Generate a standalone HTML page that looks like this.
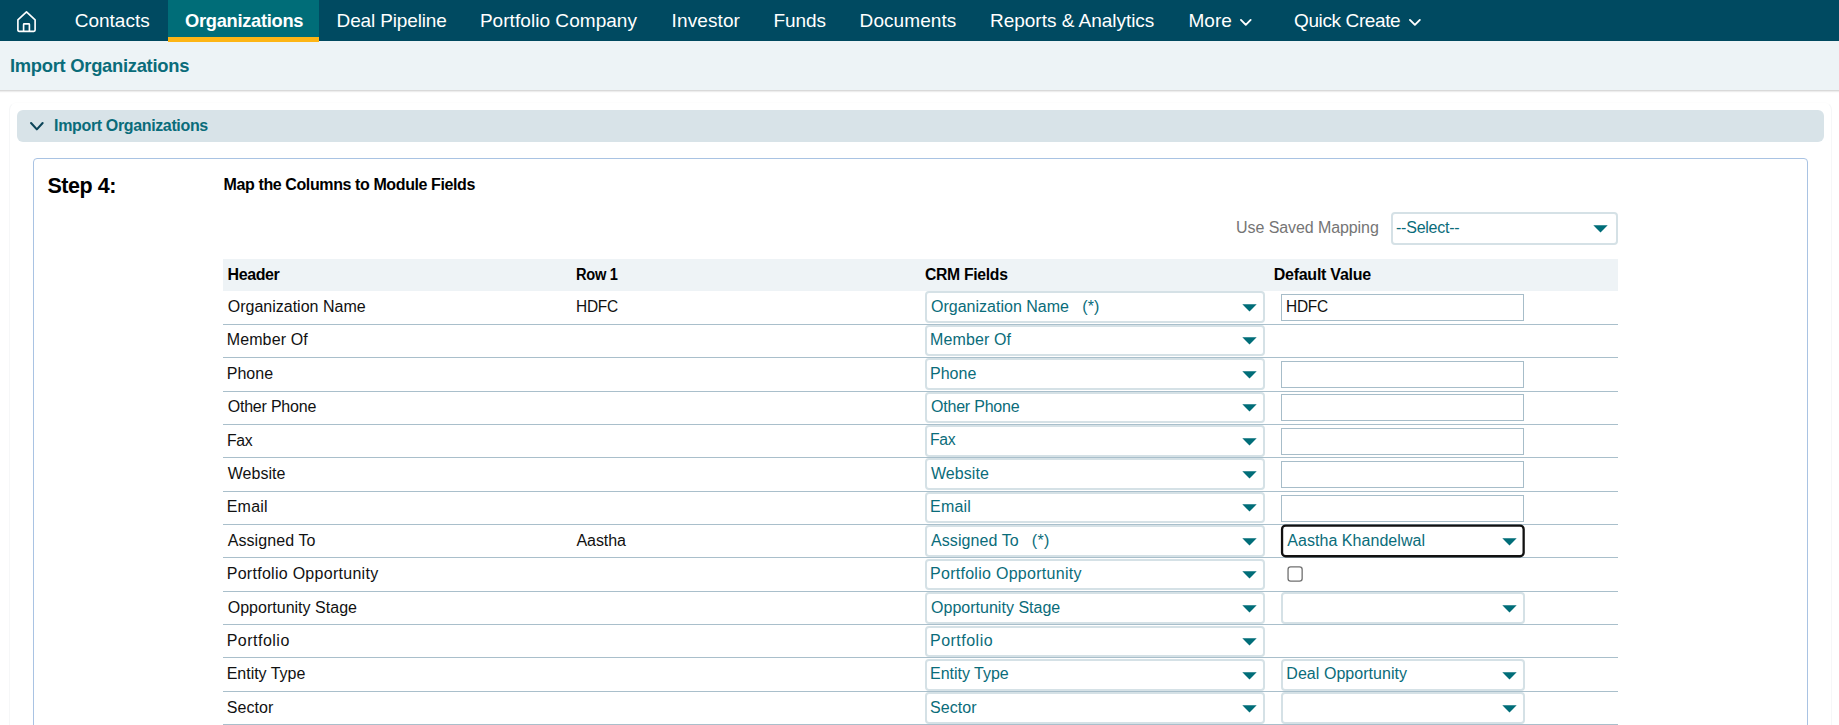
<!DOCTYPE html>
<html><head><meta charset="utf-8"><title>Import Organizations</title>
<style>
html,body{margin:0;padding:0;background:#fff;width:1839px;height:725px;overflow:hidden;}
#root{position:absolute;left:0;top:0;width:1839px;height:725px;overflow:hidden;background:#fff;font-family:"Liberation Sans", sans-serif;}
.b{position:absolute;box-sizing:content-box;}
.t{position:absolute;white-space:pre;line-height:1em;font-family:"Liberation Sans", sans-serif;transform-origin:0 0;}
</style></head><body><div id="root">
<div class="b" style="left:0;top:0;width:1839px;height:41px;background:#004a61"></div>
<div class="b" style="left:168px;top:0;width:151px;height:37px;background:#006d78"></div>
<div class="b" style="left:-6px;top:41px;width:1851px;height:49px;background:#edf3f6;box-shadow:0 1px 2px rgba(0,0,0,0.22)"></div>
<div class="b" style="left:168px;top:37px;width:151px;height:4.7px;background:#fdb515"></div>
<div class="b" style="left:9px;top:102px;width:1821px;height:700px;border:1px solid #f6f7f8;border-top-color:#fdfdfd;border-radius:8px"></div>
<div class="b" style="left:17px;top:110px;width:1807px;height:32px;background:#d8e3e8;border-radius:6px"></div>
<div class="b" style="left:33px;top:158px;width:1773px;height:700px;border:1px solid #a9c3e3;border-radius:4px"></div>
<div class="b" style="left:1391px;top:212px;width:223px;height:29px;border:2px solid #d5e1e6;border-radius:4px;background:#fff"></div>
<svg class="b" style="left:1592.7px;top:225px" width="15" height="8" viewBox="0 0 15 8"><path d="M0.3 0.3 L14.7 0.3 L7.5 7.6 Z" fill="#006d78"/></svg>
<div class="b" style="left:223px;top:258.7px;width:1395px;height:32.3px;background:#eef3f6"></div>
<div class="b" style="left:223px;top:324px;width:1395px;height:1px;background:#a9bfcb"></div>
<div class="b" style="left:925.3px;top:291.3px;width:335.3px;height:27.7px;border:2px solid #d5e1e6;border-radius:4px;background:#fff"></div>
<svg class="b" style="left:1242px;top:303.9px" width="15" height="8" viewBox="0 0 15 8"><path d="M0.3 0.3 L14.7 0.3 L7.5 7.6 Z" fill="#006d78"/></svg>
<div class="b" style="left:223px;top:357px;width:1395px;height:1px;background:#a9bfcb"></div>
<div class="b" style="left:925.3px;top:324.7px;width:335.3px;height:27.7px;border:2px solid #d5e1e6;border-radius:4px;background:#fff"></div>
<svg class="b" style="left:1242px;top:337.3px" width="15" height="8" viewBox="0 0 15 8"><path d="M0.3 0.3 L14.7 0.3 L7.5 7.6 Z" fill="#006d78"/></svg>
<div class="b" style="left:223px;top:391px;width:1395px;height:1px;background:#a9bfcb"></div>
<div class="b" style="left:925.3px;top:358.1px;width:335.3px;height:27.7px;border:2px solid #d5e1e6;border-radius:4px;background:#fff"></div>
<svg class="b" style="left:1242px;top:370.7px" width="15" height="8" viewBox="0 0 15 8"><path d="M0.3 0.3 L14.7 0.3 L7.5 7.6 Z" fill="#006d78"/></svg>
<div class="b" style="left:223px;top:424px;width:1395px;height:1px;background:#a9bfcb"></div>
<div class="b" style="left:925.3px;top:391.6px;width:335.3px;height:27.7px;border:2px solid #d5e1e6;border-radius:4px;background:#fff"></div>
<svg class="b" style="left:1242px;top:404.2px" width="15" height="8" viewBox="0 0 15 8"><path d="M0.3 0.3 L14.7 0.3 L7.5 7.6 Z" fill="#006d78"/></svg>
<div class="b" style="left:223px;top:457px;width:1395px;height:1px;background:#a9bfcb"></div>
<div class="b" style="left:925.3px;top:425.0px;width:335.3px;height:27.7px;border:2px solid #d5e1e6;border-radius:4px;background:#fff"></div>
<svg class="b" style="left:1242px;top:437.6px" width="15" height="8" viewBox="0 0 15 8"><path d="M0.3 0.3 L14.7 0.3 L7.5 7.6 Z" fill="#006d78"/></svg>
<div class="b" style="left:223px;top:491px;width:1395px;height:1px;background:#a9bfcb"></div>
<div class="b" style="left:925.3px;top:458.4px;width:335.3px;height:27.7px;border:2px solid #d5e1e6;border-radius:4px;background:#fff"></div>
<svg class="b" style="left:1242px;top:471.0px" width="15" height="8" viewBox="0 0 15 8"><path d="M0.3 0.3 L14.7 0.3 L7.5 7.6 Z" fill="#006d78"/></svg>
<div class="b" style="left:223px;top:524px;width:1395px;height:1px;background:#a9bfcb"></div>
<div class="b" style="left:925.3px;top:491.8px;width:335.3px;height:27.7px;border:2px solid #d5e1e6;border-radius:4px;background:#fff"></div>
<svg class="b" style="left:1242px;top:504.4px" width="15" height="8" viewBox="0 0 15 8"><path d="M0.3 0.3 L14.7 0.3 L7.5 7.6 Z" fill="#006d78"/></svg>
<div class="b" style="left:223px;top:557px;width:1395px;height:1px;background:#a9bfcb"></div>
<div class="b" style="left:925.3px;top:525.2px;width:335.3px;height:27.7px;border:2px solid #d5e1e6;border-radius:4px;background:#fff"></div>
<svg class="b" style="left:1242px;top:537.8px" width="15" height="8" viewBox="0 0 15 8"><path d="M0.3 0.3 L14.7 0.3 L7.5 7.6 Z" fill="#006d78"/></svg>
<div class="b" style="left:223px;top:591px;width:1395px;height:1px;background:#a9bfcb"></div>
<div class="b" style="left:925.3px;top:558.7px;width:335.3px;height:27.7px;border:2px solid #d5e1e6;border-radius:4px;background:#fff"></div>
<svg class="b" style="left:1242px;top:571.3px" width="15" height="8" viewBox="0 0 15 8"><path d="M0.3 0.3 L14.7 0.3 L7.5 7.6 Z" fill="#006d78"/></svg>
<div class="b" style="left:223px;top:624px;width:1395px;height:1px;background:#a9bfcb"></div>
<div class="b" style="left:925.3px;top:592.1px;width:335.3px;height:27.7px;border:2px solid #d5e1e6;border-radius:4px;background:#fff"></div>
<svg class="b" style="left:1242px;top:604.7px" width="15" height="8" viewBox="0 0 15 8"><path d="M0.3 0.3 L14.7 0.3 L7.5 7.6 Z" fill="#006d78"/></svg>
<div class="b" style="left:223px;top:657px;width:1395px;height:1px;background:#a9bfcb"></div>
<div class="b" style="left:925.3px;top:625.5px;width:335.3px;height:27.7px;border:2px solid #d5e1e6;border-radius:4px;background:#fff"></div>
<svg class="b" style="left:1242px;top:638.1px" width="15" height="8" viewBox="0 0 15 8"><path d="M0.3 0.3 L14.7 0.3 L7.5 7.6 Z" fill="#006d78"/></svg>
<div class="b" style="left:223px;top:691px;width:1395px;height:1px;background:#a9bfcb"></div>
<div class="b" style="left:925.3px;top:658.9px;width:335.3px;height:27.7px;border:2px solid #d5e1e6;border-radius:4px;background:#fff"></div>
<svg class="b" style="left:1242px;top:671.5px" width="15" height="8" viewBox="0 0 15 8"><path d="M0.3 0.3 L14.7 0.3 L7.5 7.6 Z" fill="#006d78"/></svg>
<div class="b" style="left:223px;top:724px;width:1395px;height:1px;background:#a9bfcb"></div>
<div class="b" style="left:925.3px;top:692.3px;width:335.3px;height:27.7px;border:2px solid #d5e1e6;border-radius:4px;background:#fff"></div>
<svg class="b" style="left:1242px;top:704.9px" width="15" height="8" viewBox="0 0 15 8"><path d="M0.3 0.3 L14.7 0.3 L7.5 7.6 Z" fill="#006d78"/></svg>
<div class="b" style="left:1281px;top:294.0px;width:241px;height:25px;border:1px solid #a7bdc9;background:#fff"></div>
<div class="b" style="left:1281px;top:360.8px;width:241px;height:25px;border:1px solid #a7bdc9;background:#fff"></div>
<div class="b" style="left:1281px;top:394.3px;width:241px;height:25px;border:1px solid #a7bdc9;background:#fff"></div>
<div class="b" style="left:1281px;top:427.7px;width:241px;height:25px;border:1px solid #a7bdc9;background:#fff"></div>
<div class="b" style="left:1281px;top:461.1px;width:241px;height:25px;border:1px solid #a7bdc9;background:#fff"></div>
<div class="b" style="left:1281px;top:494.5px;width:241px;height:25px;border:1px solid #a7bdc9;background:#fff"></div>
<div class="b" style="left:1281px;top:592.1px;width:239.5px;height:27.7px;border:2px solid #d5e1e6;border-radius:4px;background:#fff"></div>
<svg class="b" style="left:1502px;top:604.7px" width="15" height="8" viewBox="0 0 15 8"><path d="M0.3 0.3 L14.7 0.3 L7.5 7.6 Z" fill="#006d78"/></svg>
<div class="b" style="left:1281px;top:658.9px;width:239.5px;height:27.7px;border:2px solid #d5e1e6;border-radius:4px;background:#fff"></div>
<svg class="b" style="left:1502px;top:671.5px" width="15" height="8" viewBox="0 0 15 8"><path d="M0.3 0.3 L14.7 0.3 L7.5 7.6 Z" fill="#006d78"/></svg>
<div class="b" style="left:1281px;top:692.3px;width:239.5px;height:27.7px;border:2px solid #d5e1e6;border-radius:4px;background:#fff"></div>
<svg class="b" style="left:1502px;top:704.9px" width="15" height="8" viewBox="0 0 15 8"><path d="M0.3 0.3 L14.7 0.3 L7.5 7.6 Z" fill="#006d78"/></svg>
<svg class="b" style="left:1278px;top:522px" width="250" height="38" viewBox="1278 522 250 38"><rect x="1282.05" y="525.55" width="241.6" height="30.7" rx="3.6" ry="3.6" fill="#fff" stroke="#111" stroke-width="2.3"/></svg>
<svg class="b" style="left:1502px;top:537.8px" width="15" height="8" viewBox="0 0 15 8"><path d="M0.3 0.3 L14.7 0.3 L7.5 7.6 Z" fill="#006d78"/></svg>
<svg class="b" style="left:1285px;top:564px" width="20" height="20" viewBox="1285 564 20 20"><rect x="1288.05" y="566.85" width="14.1" height="14.3" rx="2.6" ry="2.6" fill="#fff" stroke="#707070" stroke-width="1.3"/></svg>
<svg class="b" style="left:14px;top:8px" width="26" height="26" viewBox="0 0 26 26"><path d="M3.9 11.8 L12.5 3.9 L21.1 11.8 V22 Q21.1 23.3 19.8 23.3 H5.2 Q3.9 23.3 3.9 22 Z" fill="none" stroke="#fff" stroke-width="1.65" stroke-linejoin="round"/><path d="M9.6 23.3 V16.4 Q9.6 15.8 10.2 15.8 H14.8 Q15.4 15.8 15.4 16.4 V23.3" fill="none" stroke="#fff" stroke-width="1.65"/></svg><svg class="b" style="left:1238px;top:17.2px" width="15.6" height="10.8" viewBox="-2 -2 15.6 10.8"><path d="M0.95 0.95 L5.8 5.85 L10.65 0.95" fill="none" stroke="#fff" stroke-width="1.9" stroke-linecap="round" stroke-linejoin="round"/></svg><svg class="b" style="left:1406.8px;top:17.2px" width="15.8" height="10.8" viewBox="-2 -2 15.8 10.8"><path d="M0.95 0.95 L5.9 5.85 L10.850000000000001 0.95" fill="none" stroke="#fff" stroke-width="1.9" stroke-linecap="round" stroke-linejoin="round"/></svg><svg class="b" style="left:28.3px;top:120.3px" width="17.7" height="12.4" viewBox="-2 -2 17.7 12.4"><path d="M1.05 1.05 L6.85 7.3500000000000005 L12.649999999999999 1.05" fill="none" stroke="#0d4559" stroke-width="2.1" stroke-linecap="round" stroke-linejoin="round"/></svg>
<span class="t" style="left:74.70px;top:11.00px;font-size:19px;font-weight:400;color:#fff;letter-spacing:-0.000px">Contacts</span>
<span class="t" style="left:184.60px;top:11.00px;font-size:19px;font-weight:700;color:#fff;letter-spacing:-0.300px;transform:scaleX(0.9626)">Organizations</span>
<span class="t" style="left:336.60px;top:11.00px;font-size:19px;font-weight:400;color:#fff;letter-spacing:-0.150px">Deal Pipeline</span>
<span class="t" style="left:479.90px;top:11.00px;font-size:19px;font-weight:400;color:#fff;letter-spacing:0.050px">Portfolio Company</span>
<span class="t" style="left:671.60px;top:11.00px;font-size:19px;font-weight:400;color:#fff;letter-spacing:0.100px">Investor</span>
<span class="t" style="left:773.40px;top:11.00px;font-size:19px;font-weight:400;color:#fff;letter-spacing:-0.075px">Funds</span>
<span class="t" style="left:859.60px;top:11.00px;font-size:19px;font-weight:400;color:#fff;letter-spacing:0.075px">Documents</span>
<span class="t" style="left:990.00px;top:11.00px;font-size:19px;font-weight:400;color:#fff;letter-spacing:-0.022px">Reports &amp; Analytics</span>
<span class="t" style="left:1188.40px;top:11.00px;font-size:19px;font-weight:400;color:#fff;letter-spacing:0.067px">More</span>
<span class="t" style="left:1294.00px;top:11.00px;font-size:19px;font-weight:400;color:#fff;letter-spacing:-0.382px">Quick Create</span>
<span class="t" style="left:9.50px;top:56.00px;font-size:19px;font-weight:700;color:#0a6c7a;letter-spacing:-0.300px;transform:scaleX(0.9676)">Import Organizations</span>
<span class="t" style="left:54.10px;top:118.00px;font-size:16px;font-weight:700;color:#0a6c7a;letter-spacing:-0.358px">Import Organizations</span>
<span class="t" style="left:47.40px;top:176.00px;font-size:21.5px;font-weight:700;color:#000;letter-spacing:-0.433px">Step 4:</span>
<span class="t" style="left:223.60px;top:177.00px;font-size:16px;font-weight:700;color:#000;letter-spacing:-0.394px">Map the Columns to Module Fields</span>
<span class="t" style="left:1236.10px;top:220.00px;font-size:16px;font-weight:400;color:#757575;letter-spacing:-0.087px">Use Saved Mapping</span>
<span class="t" style="left:1396.00px;top:220.00px;font-size:16px;font-weight:400;color:#0a6c7a;letter-spacing:-0.233px">--Select--</span>
<span class="t" style="left:227.50px;top:267.00px;font-size:16px;font-weight:700;color:#000;letter-spacing:-0.400px">Header</span>
<span class="t" style="left:576.40px;top:267.00px;font-size:16px;font-weight:700;color:#000;letter-spacing:-0.300px;transform:scaleX(0.9130)">Row 1</span>
<span class="t" style="left:924.50px;top:267.00px;font-size:16px;font-weight:700;color:#000;letter-spacing:-0.300px;transform:scaleX(0.9821)">CRM Fields</span>
<span class="t" style="left:1273.70px;top:267.00px;font-size:16px;font-weight:700;color:#000;letter-spacing:-0.250px">Default Value</span>
<span class="t" style="left:227.70px;top:299.00px;font-size:16px;font-weight:400;color:#111;letter-spacing:0.006px">Organization Name</span>
<span class="t" style="left:931.00px;top:299.00px;font-size:16px;font-weight:400;color:#0a6c7a;letter-spacing:0.006px">Organization Name</span>
<span class="t" style="left:226.70px;top:332.00px;font-size:16px;font-weight:400;color:#111;letter-spacing:0.125px">Member Of</span>
<span class="t" style="left:930.00px;top:332.00px;font-size:16px;font-weight:400;color:#0a6c7a;letter-spacing:0.125px">Member Of</span>
<span class="t" style="left:226.70px;top:366.00px;font-size:16px;font-weight:400;color:#111;letter-spacing:0.025px">Phone</span>
<span class="t" style="left:930.00px;top:366.00px;font-size:16px;font-weight:400;color:#0a6c7a;letter-spacing:0.025px">Phone</span>
<span class="t" style="left:227.70px;top:399.00px;font-size:16px;font-weight:400;color:#111;letter-spacing:-0.210px">Other Phone</span>
<span class="t" style="left:931.00px;top:399.00px;font-size:16px;font-weight:400;color:#0a6c7a;letter-spacing:-0.210px">Other Phone</span>
<span class="t" style="left:226.72px;top:433.00px;font-size:16px;font-weight:400;color:#111;letter-spacing:-0.300px;transform:scaleX(0.9840)">Fax</span>
<span class="t" style="left:930.02px;top:432.00px;font-size:16px;font-weight:400;color:#0a6c7a;letter-spacing:-0.300px;transform:scaleX(0.9840)">Fax</span>
<span class="t" style="left:227.70px;top:466.00px;font-size:16px;font-weight:400;color:#111;letter-spacing:0.050px">Website</span>
<span class="t" style="left:931.00px;top:466.00px;font-size:16px;font-weight:400;color:#0a6c7a;letter-spacing:0.050px">Website</span>
<span class="t" style="left:226.70px;top:499.00px;font-size:16px;font-weight:400;color:#111;letter-spacing:0.225px">Email</span>
<span class="t" style="left:930.00px;top:499.00px;font-size:16px;font-weight:400;color:#0a6c7a;letter-spacing:0.225px">Email</span>
<span class="t" style="left:227.70px;top:533.00px;font-size:16px;font-weight:400;color:#111;letter-spacing:0.080px">Assigned To</span>
<span class="t" style="left:931.00px;top:533.00px;font-size:16px;font-weight:400;color:#0a6c7a;letter-spacing:0.080px">Assigned To</span>
<span class="t" style="left:226.70px;top:566.00px;font-size:16px;font-weight:400;color:#111;letter-spacing:0.280px">Portfolio Opportunity</span>
<span class="t" style="left:930.00px;top:566.00px;font-size:16px;font-weight:400;color:#0a6c7a;letter-spacing:0.280px">Portfolio Opportunity</span>
<span class="t" style="left:227.70px;top:600.00px;font-size:16px;font-weight:400;color:#111;letter-spacing:0.019px">Opportunity Stage</span>
<span class="t" style="left:931.00px;top:600.00px;font-size:16px;font-weight:400;color:#0a6c7a;letter-spacing:0.019px">Opportunity Stage</span>
<span class="t" style="left:226.70px;top:633.00px;font-size:16px;font-weight:400;color:#111;letter-spacing:0.488px">Portfolio</span>
<span class="t" style="left:930.00px;top:633.00px;font-size:16px;font-weight:400;color:#0a6c7a;letter-spacing:0.487px">Portfolio</span>
<span class="t" style="left:226.70px;top:666.00px;font-size:16px;font-weight:400;color:#111;letter-spacing:-0.020px">Entity Type</span>
<span class="t" style="left:930.00px;top:666.00px;font-size:16px;font-weight:400;color:#0a6c7a;letter-spacing:-0.020px">Entity Type</span>
<span class="t" style="left:226.70px;top:700.00px;font-size:16px;font-weight:400;color:#111;letter-spacing:0.080px">Sector</span>
<span class="t" style="left:930.00px;top:700.00px;font-size:16px;font-weight:400;color:#0a6c7a;letter-spacing:0.080px">Sector</span>
<span class="t" style="left:1082.20px;top:299.00px;font-size:16px;font-weight:400;color:#0a6c7a;letter-spacing:0.150px">(*)</span>
<span class="t" style="left:1031.80px;top:533.00px;font-size:16px;font-weight:400;color:#0a6c7a;letter-spacing:0.300px">(*)</span>
<span class="t" style="left:575.63px;top:299.00px;font-size:16px;font-weight:400;color:#111;letter-spacing:-0.300px;transform:scaleX(0.9667)">HDFC</span>
<span class="t" style="left:576.40px;top:533.00px;font-size:16px;font-weight:400;color:#111;letter-spacing:-0.040px">Aastha</span>
<span class="t" style="left:1286.03px;top:299.00px;font-size:16px;font-weight:400;color:#111;letter-spacing:-0.300px;transform:scaleX(0.9667)">HDFC</span>
<span class="t" style="left:1287.30px;top:533.00px;font-size:16px;font-weight:400;color:#0a6c7a;letter-spacing:0.044px">Aastha Khandelwal</span>
<span class="t" style="left:1286.30px;top:666.00px;font-size:16px;font-weight:400;color:#0a6c7a;letter-spacing:0.047px">Deal Opportunity</span>
</div></body></html>
